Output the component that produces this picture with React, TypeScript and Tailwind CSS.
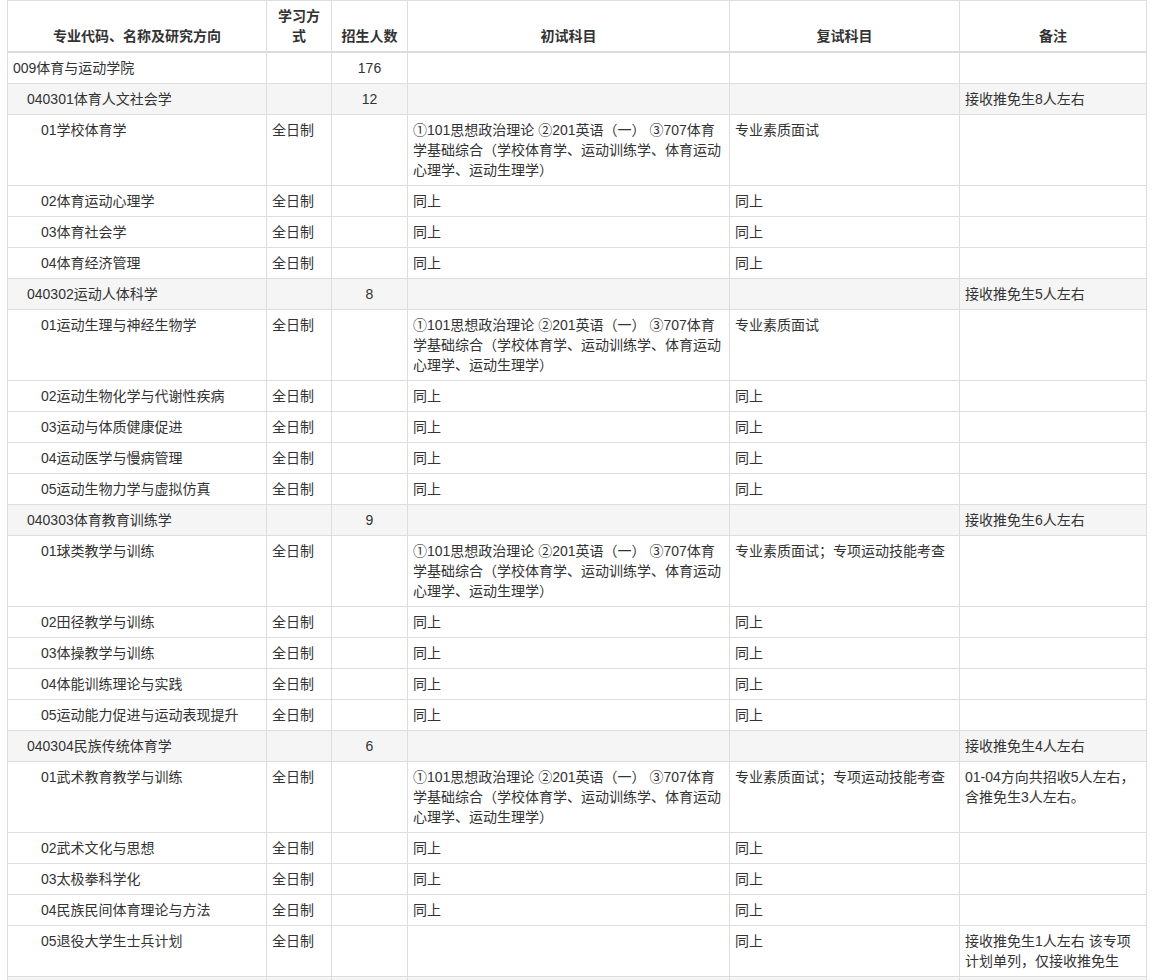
import React from "react";

type Row =
  | { kind: "school"; name: string; count: string }
  | { kind: "group"; name: string; count: string; note: string }
  | { kind: "dir"; name: string; mode: string; first: "full" | "same" | ""; second: string; note?: React.ReactNode };

const FIRST_FULL = (
  <>
    ①101思想政治理论 ②201英语（一） ③707体育
    <br />
    学基础综合（学校体育学、运动训练学、体育运动
    <br />
    心理学、运动生理学）
  </>
);

const rows: Row[] = [
  { kind: "school", name: "009体育与运动学院", count: "176" },
  { kind: "group", name: "040301体育人文社会学", count: "12", note: "接收推免生8人左右" },
  { kind: "dir", name: "01学校体育学", mode: "全日制", first: "full", second: "专业素质面试" },
  { kind: "dir", name: "02体育运动心理学", mode: "全日制", first: "same", second: "同上" },
  { kind: "dir", name: "03体育社会学", mode: "全日制", first: "same", second: "同上" },
  { kind: "dir", name: "04体育经济管理", mode: "全日制", first: "same", second: "同上" },
  { kind: "group", name: "040302运动人体科学", count: "8", note: "接收推免生5人左右" },
  { kind: "dir", name: "01运动生理与神经生物学", mode: "全日制", first: "full", second: "专业素质面试" },
  { kind: "dir", name: "02运动生物化学与代谢性疾病", mode: "全日制", first: "same", second: "同上" },
  { kind: "dir", name: "03运动与体质健康促进", mode: "全日制", first: "same", second: "同上" },
  { kind: "dir", name: "04运动医学与慢病管理", mode: "全日制", first: "same", second: "同上" },
  { kind: "dir", name: "05运动生物力学与虚拟仿真", mode: "全日制", first: "same", second: "同上" },
  { kind: "group", name: "040303体育教育训练学", count: "9", note: "接收推免生6人左右" },
  { kind: "dir", name: "01球类教学与训练", mode: "全日制", first: "full", second: "专业素质面试；专项运动技能考查" },
  { kind: "dir", name: "02田径教学与训练", mode: "全日制", first: "same", second: "同上" },
  { kind: "dir", name: "03体操教学与训练", mode: "全日制", first: "same", second: "同上" },
  { kind: "dir", name: "04体能训练理论与实践", mode: "全日制", first: "same", second: "同上" },
  { kind: "dir", name: "05运动能力促进与运动表现提升", mode: "全日制", first: "same", second: "同上" },
  { kind: "group", name: "040304民族传统体育学", count: "6", note: "接收推免生4人左右" },
  {
    kind: "dir",
    name: "01武术教育教学与训练",
    mode: "全日制",
    first: "full",
    second: "专业素质面试；专项运动技能考查",
    note: (
      <>
        01-04方向共招收5人左右，
        <br />
        含推免生3人左右。
      </>
    ),
  },
  { kind: "dir", name: "02武术文化与思想", mode: "全日制", first: "same", second: "同上" },
  { kind: "dir", name: "03太极拳科学化", mode: "全日制", first: "same", second: "同上" },
  { kind: "dir", name: "04民族民间体育理论与方法", mode: "全日制", first: "same", second: "同上" },
  {
    kind: "dir",
    name: "05退役大学生士兵计划",
    mode: "全日制",
    first: "",
    second: "同上",
    note: (
      <>
        接收推免生1人左右 该专项
        <br />
        计划单列，仅接收推免生
      </>
    ),
  },
];

const td = "border border-[#dddddd] px-[5px] py-[5px] align-top";
const th = "border border-[#dddddd] border-b-2 px-[5px] py-[5px] align-bottom text-center font-bold";

export default function App() {
  return (
    <div
      className="min-h-[980px] bg-white pl-[7px] text-[14px] leading-[20px] text-[#333333]"
      style={{ fontFamily: '"Liberation Sans", "Noto Sans CJK SC", sans-serif' }}
    >
      <table className="w-[1139px] table-fixed border-collapse">
        <colgroup>
          <col className="w-[259px]" />
          <col className="w-[65px]" />
          <col className="w-[76px]" />
          <col className="w-[322px]" />
          <col className="w-[230px]" />
          <col className="w-[187px]" />
        </colgroup>
        <thead>
          <tr>
            <th className={th}>专业代码、名称及研究方向</th>
            <th className={th}>学习方式</th>
            <th className={th}>招生人数</th>
            <th className={th}>初试科目</th>
            <th className={th}>复试科目</th>
            <th className={th}>备注</th>
          </tr>
        </thead>
        <tbody>
          {rows.map((r, i) => {
            if (r.kind === "school") {
              return (
                <tr key={i}>
                  <td className={td}>{r.name}</td>
                  <td className={td}></td>
                  <td className={`${td} text-center`}>{r.count}</td>
                  <td className={td}></td>
                  <td className={td}></td>
                  <td className={td}></td>
                </tr>
              );
            }
            if (r.kind === "group") {
              return (
                <tr key={i} className="bg-[#f5f5f5]">
                  <td className={`${td} pl-[19px]`}>{r.name}</td>
                  <td className={td}></td>
                  <td className={`${td} text-center`}>{r.count}</td>
                  <td className={td}></td>
                  <td className={td}></td>
                  <td className={td}>{r.note}</td>
                </tr>
              );
            }
            return (
              <tr key={i}>
                <td className={`${td} pl-[33px]`}>{r.name}</td>
                <td className={td}>{r.mode}</td>
                <td className={td}></td>
                <td className={`${td} whitespace-nowrap`}>
                  {r.first === "full" ? FIRST_FULL : r.first === "same" ? "同上" : ""}
                </td>
                <td className={td}>{r.second}</td>
                <td className={`${td} whitespace-nowrap`}>{r.note}</td>
              </tr>
            );
          })}
          <tr className="bg-[#f5f5f5]">
            <td className={`${td} pl-[19px]`}>&nbsp;</td>
            <td className={td}></td>
            <td className={td}></td>
            <td className={td}></td>
            <td className={td}></td>
            <td className={td}></td>
          </tr>
        </tbody>
      </table>
    </div>
  );
}
